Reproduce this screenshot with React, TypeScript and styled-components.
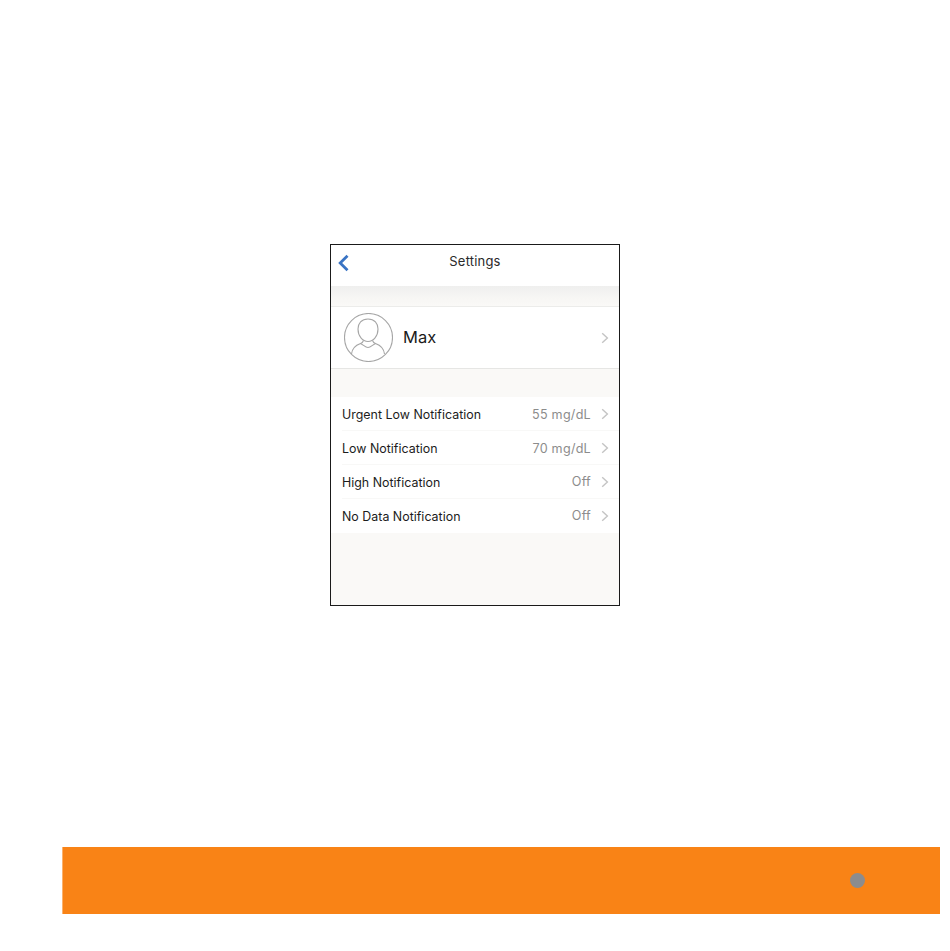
import React from "react";
import styled, { createGlobalStyle } from "styled-components";

const Global = createGlobalStyle`
  html, body { margin: 0; padding: 0; background: #fff; }
  body { font-family: "Inter", "Liberation Sans", sans-serif; }
`;

const Page = styled.div`
  width: 950px;
  height: 951px;
  padding-top: 244px;
  box-sizing: border-box;
  display: flex;
  flex-direction: column;
  overflow: hidden;
`;

const Phone = styled.section`
  width: 290px;
  height: 362px;
  margin-left: 330px;
  box-sizing: border-box;
  border: 1px solid #1a1a1a;
  background: #faf9f7;
  display: flex;
  flex-direction: column;
`;

const NavBar = styled.header`
  height: 41px;
  flex: none;
  background: #fff;
  display: grid;
  grid-template-columns: 40px 1fr 40px;
  align-items: center;
  padding-bottom: 9px;
  box-sizing: border-box;
`;

const BackIcon = styled.svg`
  width: 13px;
  height: 18px;
  margin-left: 6px;
  position: relative;
  top: 2px;
`;

const Title = styled.h1`
  margin: 0;
  text-align: center;
  font-size: 13px;
  font-weight: 400;
  letter-spacing: 0.2px;
  color: #2a2a2a;
`;

const NavShade = styled.div`
  height: 20px;
  flex: none;
  background: linear-gradient(#efefee, #f7f6f4 60%, #faf9f7);
`;

const ProfileRow = styled.div`
  height: 63px;
  flex: none;
  box-sizing: border-box;
  background: #fff;
  border-top: 1px solid #ececea;
  border-bottom: 1px solid #e6e6e4;
  display: flex;
  align-items: center;
  padding: 0 10px 0 13px;
`;

const Avatar = styled.svg`
  width: 49px;
  height: 49px;
  flex: none;
`;

const Name = styled.span`
  flex: 1;
  margin-left: 10px;
  padding-bottom: 2px;
  font-size: 16.5px;
  letter-spacing: 0.1px;
  color: #1a1a1a;
`;

const List = styled.div`
  margin-top: 28px;
  background: #fff;
  flex: none;
`;

const Row = styled.div<{ $last?: boolean }>`
  height: 34px;
  box-sizing: border-box;
  margin-left: 11px;
  padding: 1px 10px 0 0;
  display: flex;
  align-items: center;
  border-bottom: 1px solid ${(p) => (p.$last ? "transparent" : "#f8f8f7")};
`;

const Label = styled.span`
  flex: 1;
  font-size: 12.4px;
  letter-spacing: 0.02px;
  color: #1c1c1c;
`;

const Value = styled.span<{ $raised?: boolean }>`
  font-size: 12.6px;
  letter-spacing: 0.25px;
  color: #8c8c8c;
  margin-right: 10px;
  position: relative;
  top: ${(p) => (p.$raised ? "-1px" : "0")};
`;

const Chevron = styled.svg`
  width: 8px;
  height: 12px;
  flex: none;
`;

const Banner = styled.footer`
  margin-top: 241px;
  margin-left: 62px;
  width: 878px;
  height: 67px;
  flex: none;
  background: #f98316;
  border-left: 1px solid #fbb26e;
  box-sizing: border-box;
  display: flex;
  align-items: center;
  justify-content: flex-end;
  padding-right: 75px;
`;

const Dot = styled.span`
  width: 15px;
  height: 15px;
  border-radius: 50%;
  background: #8c8c8e;
`;

const Caret = () => (
  <Chevron viewBox="0 0 8 12">
    <path d="M1.2 1.2 L6.4 6 L1.2 10.8" fill="none" stroke="#c4c4c4" strokeWidth="1.4" />
  </Chevron>
);

const rows = [
  { label: "Urgent Low Notification", value: "55 mg/dL" },
  { label: "Low Notification", value: "70 mg/dL" },
  { label: "High Notification", value: "Off", raised: true },
  { label: "No Data Notification", value: "Off", raised: true },
];

export default function App() {
  return (
    <>
      <Global />
      <Page>
        <Phone>
          <NavBar>
            <BackIcon viewBox="0 0 13 18">
              <path d="M10.5 1.8 L3.2 9 L10.5 16.2" fill="none" stroke="#3a74c4" strokeWidth="2.8" />
            </BackIcon>
            <Title>Settings</Title>
            <span />
          </NavBar>
          <NavShade />
          <ProfileRow>
            <Avatar viewBox="0 0 49 49">
              <g fill="none" stroke="#a6a6a6" strokeWidth="1.1">
                <circle cx="24.5" cy="24.5" r="24" />
                <path d="M24 6 C17.5 6 14 10.5 14 16 C14 23 18.5 28.5 24 28.5 C29.5 28.5 34 23 34 16 C34 10.5 30.5 6 24 6 Z" />
                <path d="M7.5 41 C8 36 11 32.5 16.5 30.5 C18 30 19 29 19.5 27.5 M28.5 27.5 C29 29 30 30 31.5 30.5 C37 32.5 40 36 40.5 41 M16.5 30.5 C19 31.5 21.5 34.5 24 34.5 C26.5 34.5 29 31.5 31.5 30.5" />
              </g>
            </Avatar>
            <Name>Max</Name>
            <Caret />
          </ProfileRow>
          <List>
            {rows.map((r, i) => (
              <Row key={r.label} $last={i === rows.length - 1}>
                <Label>{r.label}</Label>
                <Value $raised={r.raised}>{r.value}</Value>
                <Caret />
              </Row>
            ))}
          </List>
        </Phone>
        <Banner>
          <Dot />
        </Banner>
      </Page>
    </>
  );
}
